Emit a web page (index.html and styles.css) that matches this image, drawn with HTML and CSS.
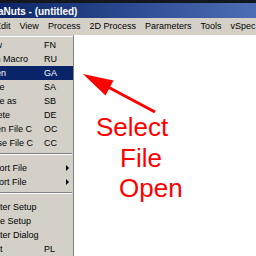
FILE: index.html
```html
<!DOCTYPE html>
<html lang="en">
<head>
  <meta charset="UTF-8" />
  <title>aNuts - (untitled)</title>
  <link rel="stylesheet" href="styles.css">
</head>
<body>
  <div class="window">
    <div class="topstrip"></div>
    <div class="titlebar"><span class="title">aNuts - (untitled)</span></div>
    <div class="menubar">
      <span>Edit</span>
      <span>View</span>
      <span>Process</span>
      <span>2D Process</span>
      <span>Parameters</span>
      <span>Tools</span>
      <span>vSpec</span>
    </div>
    <div class="client">
      <div class="dropdown">
        <div class="item"><span>New</span><span>FN</span></div>
        <div class="item"><span>Run Macro</span><span>RU</span></div>
        <div class="item selected"><span>Open</span><span>GA</span></div>
        <div class="item"><span>Save</span><span>SA</span></div>
        <div class="item"><span>Save as</span><span>SB</span></div>
        <div class="item"><span>Delete</span><span>DE</span></div>
        <div class="item"><span>Open File C</span><span>OC</span></div>
        <div class="item"><span>Close File C</span><span>CC</span></div>
        <div class="sep"></div>
        <div class="item"><span>Export File</span><span></span><i class="sub"></i></div>
        <div class="item"><span>Import File</span><span></span><i class="sub"></i></div>
        <div class="sep"></div>
        <div class="item"><span>Printer Setup</span><span></span></div>
        <div class="item"><span>Page Setup</span><span></span></div>
        <div class="item"><span>Printer Dialog</span><span></span></div>
        <div class="item"><span>Print</span><span>PL</span></div>
      </div>
      <div class="document"></div>
    </div>

    <!-- red callout drawn over the screenshot -->
    <svg class="arrow" width="256" height="256" viewBox="0 0 256 256">
      <line x1="155" y1="112" x2="108" y2="87" stroke="#f00" stroke-width="3" />
      <polygon points="83,74 113.5,80.5 105.5,95.5" fill="#f00" />
    </svg>
    <div class="callout">
      <div class="line">Select</div>
      <div class="line file">File</div>
      <div class="line open">Open</div>
    </div>
  </div>
</body>
</html>
```
FILE: styles.css
```css
body {
  margin: 0;
  background: #fff;
  overflow: hidden;
  font-family: "Liberation Sans", Arial, sans-serif;
}

.window {
  position: relative;
  width: 256px;
  height: 256px;
  overflow: hidden;
}

.topstrip {
  height: 3px;
  background: #15171f;
}

.titlebar {
  height: 15px;
  box-sizing: border-box;
  padding-top: 2px;
  background: linear-gradient(to right, #0c2568, #2c4a90 50%, #4d6eb2);
  color: #fff;
  font-weight: bold;
  font-size: 10px;
  line-height: 13px;
  white-space: nowrap;
}

.title {
  margin-left: -2px;
}

.menubar {
  display: flex;
  gap: 9px;
  height: 17px;
  margin-left: -5px;
  background: #d4d0c8;
  font-size: 9px;
  line-height: 17px;
  color: #000;
  white-space: nowrap;
}

.client {
  display: flex;
  height: 221px;
}

.dropdown {
  width: 74px;
  flex: 0 0 auto;
  align-self: flex-start;
  box-sizing: border-box;
  background: #d4d0c8;
  border-top: 1px solid #d4d0c8;
  border-right: 1px solid #808080;
  border-bottom: 1px solid #808080;
  box-shadow: 1px 1px 0 #404040, inset 0 1px 0 #fff;
  padding: 2px 0 1px;
  font-size: 9px;
  color: #000;
}

.item {
  display: grid;
  grid-template-columns: 60px 22px 8px;
  width: 89px;
  margin-left: -16px;
  height: 14px;
  line-height: 14px;
  white-space: nowrap;
}

.item.selected {
  background: #0a246a;
  color: #fff;
}

.sub {
  align-self: center;
  width: 0;
  height: 0;
  border-left: 3px solid #000;
  border-top: 3px solid transparent;
  border-bottom: 3px solid transparent;
}

.sep {
  height: 8px;
}

.sep::after {
  content: "";
  display: block;
  margin: 3px 1px 0 0;
  border-top: 1px solid #808080;
  border-bottom: 1px solid #fff;
}

.document {
  flex: 1;
  background: #fff;
}

.arrow {
  position: absolute;
  left: 0;
  top: 0;
}

.callout {
  position: absolute;
  left: 96px;
  top: 112px;
  color: #f00;
  font-size: 26px;
  line-height: 30.5px;
  white-space: nowrap;
}

.callout .file {
  padding-left: 24px;
}

.callout .open {
  padding-left: 23px;
}
```
